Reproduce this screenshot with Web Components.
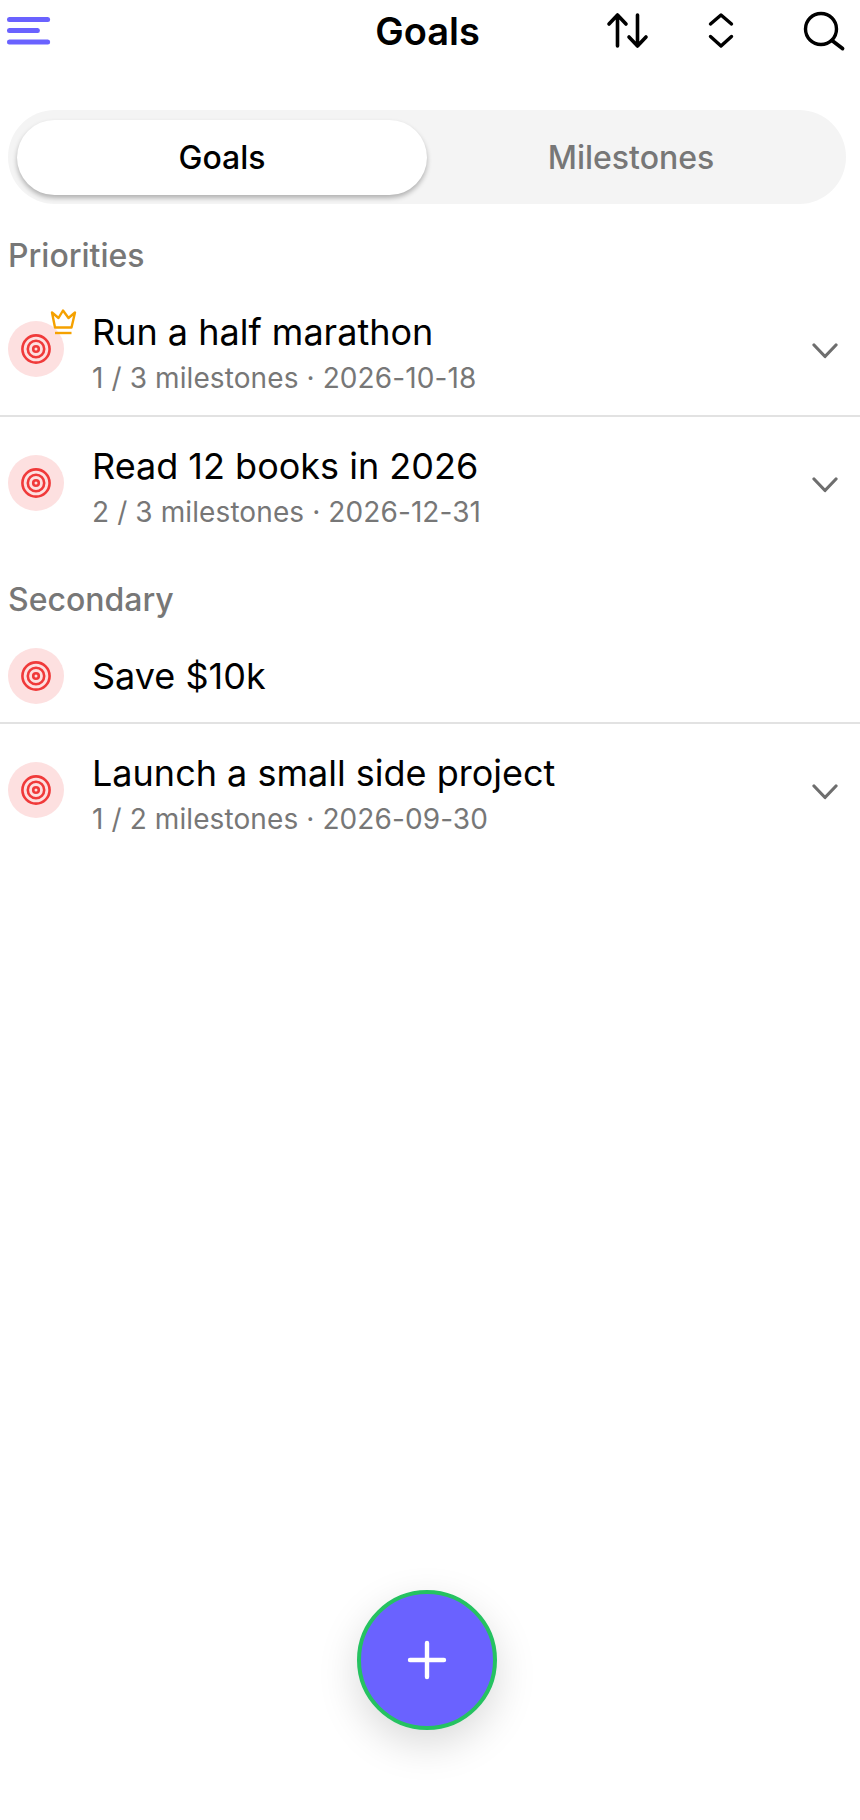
<!DOCTYPE html>
<html>
<head>
<meta charset="utf-8">
<title>Goals</title>
<style>
  html, body { margin: 0; background: #fff; }
  body { font-family: Inter, "Liberation Sans", sans-serif; color: #000; height: 1820px; overflow: hidden; position: relative; }
</style>
</head>
<body>
<app-header title="Goals"></app-header>
<seg-control first="Goals" second="Milestones"></seg-control>
<section-label style="--top: 34px; --bottom: 9px">Priorities</section-label>
<goal-row title="Run a half marathon" sub="1 / 3 milestones · 2026-10-18" crown divider></goal-row>
<goal-row title="Read 12 books in 2026" sub="2 / 3 milestones · 2026-12-31"></goal-row>
<section-label style="--top: 31px; --bottom: 11px">Secondary</section-label>
<goal-row title="Save $10k" divider></goal-row>
<goal-row title="Launch a small side project" sub="1 / 2 milestones · 2026-09-30"></goal-row>
<fab-button></fab-button>

<script>
class AppHeader extends HTMLElement {
  connectedCallback() {
    let s = this.attachShadow({ mode: 'open' })
    s.innerHTML = `
    <style>
      :host { display: block; height: 110px; position: relative; }
      .bar { display: flex; align-items: flex-start; height: 100%; }
      .menu { margin: 14px 0 0 6px; flex: none; }
      h1 { position: absolute; left: 0; right: 5px; top: 8px; margin: 0; text-align: center; font-size: 38px; line-height: 46px; font-weight: 600; }
      .tools { margin-left: auto; display: flex; }
      svg { display: block; }
    </style>
    <div class="bar">
      <svg class="menu" width="46" height="32" viewBox="0 0 46 32" fill="none" stroke="#6a62ff" stroke-width="5" stroke-linecap="round">
        <path d="M3.5 5.5H45M3.5 16.5H34M3.5 28H45" transform="scale(.93 1)"/>
      </svg>
      <h1>${this.getAttribute('title')}</h1>
      <div class="tools">
        <svg width="860" height="60" viewBox="0 0 860 60" style="margin-left:-860px" fill="none" stroke="#000" stroke-width="3.6" stroke-linecap="round" stroke-linejoin="round">
          <path d="M617.5 46V15M609 24L617.5 15L626 24"/>
          <path d="M637.5 15V46M629 37L637.5 46L646 37"/>
          <path d="M710.5 24L721 15L731.5 24M710.5 36.5L721 46L731.5 36.5" stroke-width="3.4"/>
          <circle cx="821" cy="29" r="15.5" stroke-width="3.4"/>
          <path d="M832 40.5L842.5 48.5" stroke-width="3.8"/>
        </svg>
      </div>
    </div>`
  }
}
customElements.define('app-header', AppHeader)

class SegControl extends HTMLElement {
  connectedCallback() {
    let s = this.attachShadow({ mode: 'open' })
    s.innerHTML = `
    <style>
      :host { display: block; margin: 0 14px 0 8px; height: 94px; box-sizing: border-box; padding: 10px 11px 9px 9px; background: #f4f4f4; border-radius: 47px; }
      .wrap { display: grid; grid-template-columns: 410px 1fr; height: 100%; font-size: 32px; }
      .item { display: flex; align-items: center; justify-content: center; border-radius: 38px; color: #777; font-weight: 500; }
      .on { background: #fff; color: #000; box-shadow: 0 3px 5px rgba(0,0,0,.28); }
    </style>
    <div class="wrap">
      <div class="item on">${this.getAttribute('first')}</div>
      <div class="item">${this.getAttribute('second')}</div>
    </div>`
  }
}
customElements.define('seg-control', SegControl)

class SectionLabel extends HTMLElement {
  connectedCallback() {
    let s = this.attachShadow({ mode: 'open' })
    s.innerHTML = `
    <style>
      :host { display: block; padding: var(--top) 8px var(--bottom); font-size: 32px; line-height: 36px; font-weight: 500; color: #777; }
    </style>
    <slot></slot>`
  }
}
customElements.define('section-label', SectionLabel)

class GoalIcon extends HTMLElement {
  connectedCallback() {
    let s = this.attachShadow({ mode: 'open' })
    let crown = this.hasAttribute('crown') ? `
      <svg class="crown" width="28" height="28" viewBox="0 0 28 28" fill="none" stroke="#f5a100" stroke-width="2.4" stroke-linejoin="round">
        <path d="M6 19.5L3 4.5L9.5 10L14 2.5L19.5 10L26 4.5L22.5 19.5Z"/>
        <path d="M6 25H22.5"/>
      </svg>` : ''
    s.innerHTML = `
    <style>
      :host { display: block; position: relative; width: 56px; height: 56px; flex: none; }
      .disc { width: 56px; height: 56px; border-radius: 50%; background: #fde0e0; display: flex; align-items: center; justify-content: center; }
      svg { display: block; }
      .crown { position: absolute; left: 41px; top: -13px; }
    </style>
    <div class="disc">
      <svg width="32" height="32" viewBox="0 0 32 32" fill="none" stroke="#f03a3a" stroke-width="2.6">
        <circle cx="16" cy="16" r="13.6"/>
        <circle cx="16" cy="16" r="8.2"/>
        <circle cx="16" cy="16" r="2.8"/>
      </svg>
    </div>${crown}`
  }
}
customElements.define('goal-icon', GoalIcon)

class GoalRow extends HTMLElement {
  connectedCallback() {
    let sub = this.getAttribute('sub')
    let s = this.attachShadow({ mode: 'open' })
    s.innerHTML = `
    <style>
      :host { display: flex; align-items: center; box-sizing: border-box; height: ${sub ? 134 : 95}px; padding-left: 8px; padding-bottom: 2px; }
      :host([divider]) { border-bottom: 2px solid #e2e2e2; padding-bottom: 0; }
      .text { margin-left: 28px; flex: 1; min-width: 0; ${sub ? 'padding-top: 6px;' : ''} }
      .title { font-size: 36px; line-height: 44px; font-weight: 400; }
      .sub { font-size: 28px; line-height: 34px; color: #777; margin-top: 7px; letter-spacing: .1px; }
      .chev { margin: 4px 22px 0 0; flex: none; display: block; }
    </style>
    <goal-icon ${this.hasAttribute('crown') ? 'crown' : ''}></goal-icon>
    <div class="text">
      <div class="title">${this.getAttribute('title')}</div>
      ${sub ? `<div class="sub">${sub}</div>` : ''}
    </div>
    ${sub ? `<svg class="chev" width="26" height="16" viewBox="0 0 26 16" fill="none" stroke="#6e6e6e" stroke-width="3.2" stroke-linecap="round" stroke-linejoin="round"><path d="M2 2L13 13.5L24 2"/></svg>` : ''}`
  }
}
customElements.define('goal-row', GoalRow)

class FabButton extends HTMLElement {
  connectedCallback() {
    let s = this.attachShadow({ mode: 'open' })
    s.innerHTML = `
    <style>
      :host { position: absolute; left: 357px; top: 1590px; width: 140px; height: 140px; box-sizing: border-box; border-radius: 50%; background: #6a62ff; border: 4.5px solid #25c261; box-shadow: 0 14px 40px rgba(0,0,0,.15); display: flex; align-items: center; justify-content: center; }
      svg { display: block; }
    </style>
    <svg width="40" height="40" viewBox="0 0 40 40" fill="none" stroke="#fff" stroke-width="4.4" stroke-linecap="round"><path d="M20 3V37M3 20H37"/></svg>`
  }
}
customElements.define('fab-button', FabButton)
</script>
</body>
</html>
